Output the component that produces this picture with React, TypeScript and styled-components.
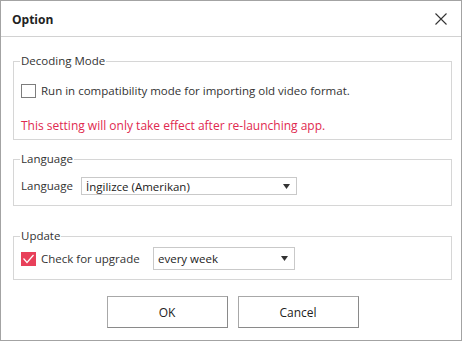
import React, { useState } from 'react';
import styled, { createGlobalStyle } from 'styled-components';

const GlobalStyle = createGlobalStyle`
  html, body {
    margin: 0;
    padding: 0;
    background: #ffffff;
  }
  body {
    font-family: 'Open Sans', 'Noto Sans', 'Liberation Sans', sans-serif;
    font-size: 11.5px;
    color: #333333;
  }
`;

const Dialog = styled.div`
  width: 462px;
  height: 341px;
  box-sizing: border-box;
  border: 1px solid #a3a3a3;
  background: #ffffff;
  display: flex;
  flex-direction: column;
`;

const Header = styled.div`
  height: 36px;
  border-bottom: 1px solid #d2d2d2;
  display: flex;
  align-items: center;
  justify-content: space-between;
  padding: 1px 12px 0 11px;
  box-sizing: border-box;
`;

const Title = styled.h1`
  margin: 0;
  font-size: 12px;
  font-weight: 700;
  color: #222222;
`;

const CloseButton = styled.button`
  border: 0;
  background: transparent;
  padding: 0;
  width: 16px;
  height: 16px;
  display: flex;
  align-items: center;
  justify-content: center;
  cursor: pointer;
`;

const Body = styled.div`
  flex: 1;
  display: flex;
  flex-direction: column;
  padding: 16px 9px 0 12px;
`;

const Group = styled.fieldset<{ $gap: number }>`
  margin: ${(p) => p.$gap}px 0 0 0;
  padding: 0 7px;
  border: 1px solid #d6d6d6;
  min-width: 0;
`;

const Legend = styled.legend`
  padding: 0 1px;
  margin-left: -1px;
  line-height: 16px;
  font-size: 11.5px;
  color: #333333;
`;

const Row = styled.div<{ $top: number; $bottom?: number }>`
  display: flex;
  align-items: center;
  margin-top: ${(p) => p.$top}px;
  margin-bottom: ${(p) => p.$bottom ?? 0}px;
`;

const CheckLabel = styled.label<{ $width?: number }>`
  display: flex;
  align-items: center;
  gap: 5px;
  line-height: 16px;
  width: ${(p) => (p.$width ? `${p.$width}px` : 'auto')};
  cursor: pointer;
`;

const Box = styled.span<{ $checked: boolean }>`
  width: 15px;
  height: 14px;
  box-sizing: border-box;
  border: 1px solid ${(p) => (p.$checked ? '#e8405a' : '#7d7d7d')};
  background: ${(p) => (p.$checked ? '#e8405a' : '#ffffff')};
  display: flex;
  align-items: center;
  justify-content: center;
`;

const Warning = styled.div`
  color: #e0294f;
  font-size: 12px;
  line-height: 16px;
  margin: 19px 0 5px 0;
`;

const FieldLabel = styled.span`
  line-height: 16px;
  width: 60px;
`;

const Select = styled.div<{ $width: number; $height: number }>`
  width: ${(p) => p.$width}px;
  height: ${(p) => p.$height}px;
  box-sizing: border-box;
  border: 1px solid #c9c9c9;
  display: flex;
  align-items: center;
  justify-content: space-between;
  padding: 0 6px 0 4px;
  background: #ffffff;
  color: #222222;
`;

const Footer = styled.div`
  display: flex;
  justify-content: center;
  gap: 10px;
  margin-top: 16px;
`;

const Button = styled.button`
  width: 121px;
  height: 32px;
  box-sizing: border-box;
  border: 1px solid #a8a8a8;
  border-right-color: #8a8a8a;
  border-bottom-color: #8a8a8a;
  background: #ffffff;
  font-family: inherit;
  font-size: 12px;
  color: #222222;
  cursor: pointer;
`;

const Arrow = () => (
  <svg width="7" height="5" viewBox="0 0 7 5">
    <path d="M0 0h7L3.5 5z" fill="#333" />
  </svg>
);

const Checkbox = ({
  checked,
  onChange,
  label,
  width,
}: {
  checked: boolean;
  onChange: () => void;
  label: string;
  width?: number;
}) => (
  <CheckLabel $width={width} onClick={onChange}>
    <Box $checked={checked}>
      {checked ? (
        <svg width="13" height="10" viewBox="0 0 13 10">
          <path d="M1.5 4.5L5 8.5L11.5 1" stroke="#fff" strokeWidth="1.2" fill="none" />
        </svg>
      ) : null}
    </Box>
    {label}
  </CheckLabel>
);

export default function App() {
  const [compat, setCompat] = useState(false);
  const [upgrade, setUpgrade] = useState(true);

  return (
    <>
      <GlobalStyle />
      <Dialog>
        <Header>
          <Title>Option</Title>
          <CloseButton aria-label="close">
            <svg width="12" height="12" viewBox="0 0 12 12">
              <path d="M0.5 0.5L11.5 11.5M11.5 0.5L0.5 11.5" stroke="#333" strokeWidth="1.1" />
            </svg>
          </CloseButton>
        </Header>
        <Body>
          <Group $gap={0}>
            <Legend>Decoding Mode</Legend>
            <Row $top={14}>
              <Checkbox
                checked={compat}
                onChange={() => setCompat(!compat)}
                label="Run in compatibility mode for importing old video format."
              />
            </Row>
            <Warning>This setting will only take effect after re-launching app.</Warning>
          </Group>
          <Group $gap={11}>
            <Legend>Language</Legend>
            <Row $top={10} $bottom={10}>
              <FieldLabel>Language</FieldLabel>
              <Select $width={216} $height={18}>
                <span>İngilizce (Amerikan)</span>
                <Arrow />
              </Select>
            </Row>
          </Group>
          <Group $gap={22}>
            <Legend>Update</Legend>
            <Row $top={3} $bottom={9}>
              <Checkbox
                width={132}
                checked={upgrade}
                onChange={() => setUpgrade(!upgrade)}
                label="Check for upgrade"
              />
              <Select $width={142} $height={23}>
                <span>every week</span>
                <Arrow />
              </Select>
            </Row>
          </Group>
          <Footer>
            <Button>OK</Button>
            <Button>Cancel</Button>
          </Footer>
        </Body>
      </Dialog>
    </>
  );
}
